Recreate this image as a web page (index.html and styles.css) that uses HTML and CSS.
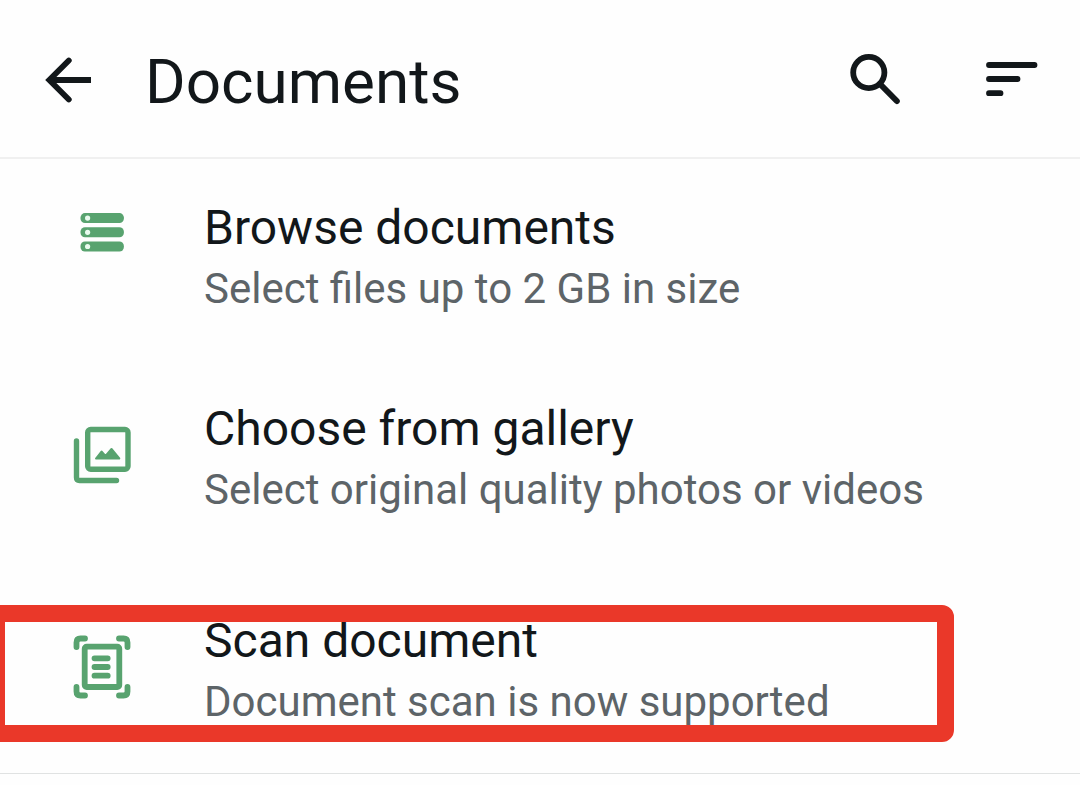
FILE: index.html
```html
<!DOCTYPE html>
<html lang="en">
<head>
<meta charset="utf-8">
<meta name="viewport" content="width=device-width, initial-scale=1">
<title>Documents</title>
<link rel="stylesheet" href="styles.css">
</head>
<body>
<header class="app-bar">
  <button class="icon-button" type="button" aria-label="Back">
    <svg width="48" height="48" viewBox="0 0 48 48" fill="none" stroke="currentColor" stroke-width="5.8">
      <path d="M5 24H47"/>
      <path d="M24.800 4.500L5.300 24L24.800 43.500" stroke-linecap="round"/>
    </svg>
  </button>
  <h1 class="app-title">Documents</h1>
  <button class="icon-button" type="button" aria-label="Search">
    <svg width="52" height="52" viewBox="0 0 52 52" fill="none" stroke="currentColor" stroke-linecap="round">
      <circle cx="18.800" cy="18.500" r="15.600" stroke-width="5.800"/>
      <path d="M30 30L46.800 47" stroke-width="6"/>
    </svg>
  </button>
  <button class="icon-button sort-button" type="button" aria-label="Sort">
    <svg width="52" height="52" viewBox="0 0 52 52" fill="none" stroke="currentColor" stroke-width="5.8" stroke-linecap="round">
      <path d="M3 11H48.500M3 25H31.500M3 39.200H14.500"/>
    </svg>
  </button>
</header>
<main class="options">
  <button class="option" type="button">
    <svg class="option-icon icon-high" width="64" height="64" viewBox="0 0 64 64">
      <g fill="currentColor">
        <rect x="10.500" y="13.100" width="43.400" height="10" rx="4.500"/>
        <rect x="10.500" y="27.300" width="43.400" height="10" rx="4.500"/>
        <rect x="10.500" y="41.500" width="43.400" height="10" rx="4.500"/>
      </g>
      <g fill="#e9fbef">
        <circle cx="17.600" cy="18.100" r="2.600"/>
        <circle cx="17.600" cy="32.300" r="2.600"/>
        <circle cx="17.600" cy="46.500" r="2.600"/>
      </g>
    </svg>
    <span class="option-text">
      <span class="option-title">Browse documents</span>
      <span class="option-note">Select files up to 2 GB in size</span>
    </span>
  </button>
  <button class="option" type="button">
    <svg class="option-icon" width="64" height="64" viewBox="0 0 64 64" fill="none" stroke="currentColor" stroke-width="5.400" stroke-linecap="round" stroke-linejoin="round">
      <rect x="17.700" y="6.500" width="40.300" height="39.700" rx="3"/>
      <path d="M6.500 18V54.500Q6.500 57.500 9.500 57.500H46.500"/>
      <path d="M26 35.500L31.500 28.500L35.500 33L41.500 26L49.300 35.500Z" fill="currentColor" stroke-width="2"/>
    </svg>
    <span class="option-text">
      <span class="option-title">Choose from gallery</span>
      <span class="option-note">Select original quality photos or videos</span>
    </span>
  </button>
  <button class="option option-marked" type="button">
    <svg class="option-icon" width="64" height="64" viewBox="0 0 64 64" fill="none" stroke="currentColor" stroke-width="5.800" stroke-linecap="round" stroke-linejoin="round">
      <rect x="14.700" y="11.700" width="34.600" height="40.300" rx="2"/>
      <path d="M24.500 23.300H37.700M24.500 32H37.700M24.500 40.700H37.700"/>
      <path d="M6.500 12V7.500Q6.500 3.500 10.500 3.500H15M49 3.500H53.500Q57.500 3.500 57.500 7.500V12M6.500 52V56.500Q6.500 60.500 10.500 60.500H15M49 60.500H53.500Q57.500 60.500 57.500 56.500V52"/>
    </svg>
    <span class="option-text">
      <span class="option-title">Scan document</span>
      <span class="option-note">Document scan is now supported</span>
    </span>
    <span class="marker" aria-hidden="true"></span>
  </button>
</main>
</body>
</html>
```
FILE: styles.css
```css
* {
  box-sizing: border-box;
}

body {
  margin: 0;
  overflow-x: hidden;
  background: #fefefe;
  color: #12171a;
  font-family: Roboto, "Liberation Sans", sans-serif;
}

button {
  margin: 0;
  border: 0;
  background: none;
  color: inherit;
  font: inherit;
  text-align: left;
}

svg {
  display: block;
  flex: none;
}

.app-bar {
  display: flex;
  align-items: center;
  padding: 42px 42px 39px 44px;
  border-bottom: 2px solid #f0f0f0;
}

.icon-button {
  padding: 0;
}

.app-title {
  flex: 1;
  margin: 0;
  padding: 4px 0 0 53px;
  font-size: 62px;
  line-height: 72px;
  font-weight: 400;
}

.sort-button {
  margin-left: 84px;
}

.options {
  border-bottom: 1px solid #e0e2e2;
}

.option {
  position: relative;
  display: flex;
  align-items: flex-start;
  gap: 70px;
  width: 100%;
  padding: 39px 70px 41px;
}

.option-icon {
  margin-top: 24px;
  color: #58a36f;
}

.icon-high {
  margin-top: 2px;
}

.option-text {
  display: flex;
  flex-direction: column;
  gap: 1px;
}

.option-title {
  font-size: 48px;
  line-height: 60px;
}

.option-note {
  color: #5d6468;
  font-size: 42px;
  line-height: 60px;
}

.option-marked {
  margin-top: 11px;
}

/* Highlight frame drawn over the row, running off the left edge */
.marker {
  position: absolute;
  top: 33px;
  right: 126px;
  bottom: 31px;
  left: -12px;
  border: 17px solid #ea3829;
  border-radius: 12px;
}
```
